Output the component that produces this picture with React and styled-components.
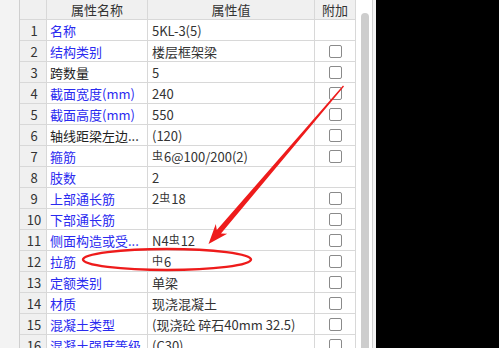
import React from "react";
import styled, { createGlobalStyle } from "styled-components";

const rows = [
  { name: "名称", value: "5KL-3(5)", blue: true, check: false },
  { name: "结构类别", value: "楼层框架梁", blue: true, check: true },
  { name: "跨数量", value: "5", blue: false, check: true },
  { name: "截面宽度(mm)", value: "240", blue: true, check: true },
  { name: "截面高度(mm)", value: "550", blue: true, check: true },
  { name: "轴线距梁左边...", value: "(120)", blue: false, check: true },
  { name: "箍筋", value: "#6@100/200(2)", blue: true, check: true },
  { name: "肢数", value: "2", blue: true, check: false },
  { name: "上部通长筋", value: "2#18", blue: true, check: true },
  { name: "下部通长筋", value: "", blue: true, check: true },
  { name: "侧面构造或受...", value: "N4#12", blue: true, check: true },
  { name: "拉筋", value: "$6", blue: true, check: true },
  { name: "定额类别", value: "单梁", blue: true, check: true },
  { name: "材质", value: "现浇混凝土", blue: true, check: true },
  { name: "混凝土类型", value: "(现浇砼 碎石40mm 32.5)", blue: true, check: true },
  { name: "混凝土强度等级", value: "(C30)", blue: true, check: true },
];

// '#' = 三级钢符号, '$' = 一级钢符号
function renderValue(text) {
  const parts = [];
  let buf = "";
  [...text].forEach((ch, i) => {
    if (ch === "#" || ch === "$") {
      if (buf) parts.push(buf);
      buf = "";
      parts.push(<Steel key={i}>{ch === "#" ? "虫" : "中"}</Steel>);
    } else {
      buf += ch;
    }
  });
  if (buf) parts.push(buf);
  return parts;
}

function App() {
  return (
    <>
      <GlobalStyle />
      <Panel>
        <Gutter />
        <Table>
          <HeadCell />
          <HeadCell>属性名称</HeadCell>
          <HeadCell>属性值</HeadCell>
          <HeadCell>附加</HeadCell>
          {rows.map((row, i) => (
            <React.Fragment key={i}>
              <NumCell>{i + 1}</NumCell>
              <NameCell $blue={row.blue}>{row.name}</NameCell>
              <ValueCell>{renderValue(row.value)}</ValueCell>
              <CheckCell>{row.check ? <Box /> : null}</CheckCell>
            </React.Fragment>
          ))}
        </Table>
        <Track>
          <Thumb />
        </Track>
        <Divider />
        <Edge />
      </Panel>
      <Marks width="499" height="348" viewBox="0 0 499 348">
        <ellipse
          cx="167"
          cy="259.5"
          rx="84"
          ry="10.5"
          fill="none"
          stroke="#ee1b1b"
          strokeWidth="2.4"
        />
        <polygon
          fill="#ee1b1b"
          points="344,86.4 221,233.6 227.2,233.7 208.5,244 215.8,223.9 216.8,230 343,85.6"
        />
      </Marks>
    </>
  );
}

export default App;

const GlobalStyle = createGlobalStyle`
  html, body {
    margin: 0;
    padding: 0;
    background: #000;
    overflow: hidden;
  }
  body {
    font-family: "Noto Sans CJK SC", "Noto Sans", sans-serif;
    font-size: 13px;
  }
`;

const Panel = styled.div`
  width: 376px;
  height: 348px;
  display: flex;
  background: #f0f0f0;
  overflow: hidden;
`;

const Gutter = styled.div`
  width: 19px;
  flex-shrink: 0;
  background: #f3f3f3;
`;

const Table = styled.div`
  width: 337px;
  flex-shrink: 0;
  align-self: flex-start;
  display: grid;
  grid-template-columns: 27px 101px 167px 41px;
  grid-auto-rows: 21px;
  grid-template-rows: 20px;
  border-left: 1px solid #cfcfcf;
  background: #fff;
`;

const Cell = styled.div`
  box-sizing: border-box;
  border-right: 1px solid #d8d8d8;
  border-bottom: 1px solid #d8d8d8;
  display: flex;
  align-items: center;
  white-space: nowrap;
  overflow: hidden;
  line-height: 1;
  color: #333;
`;

const HeadCell = styled(Cell)`
  justify-content: center;
  background: #f0f0f0;
  color: #333;
  padding-bottom: 1px;
`;

const NumCell = styled(Cell)`
  justify-content: center;
  padding-left: 2px;
  background: #f0f0f0;
  color: #333;
`;

const NameCell = styled(Cell)`
  padding-left: 3px;
  color: ${(p) => (p.$blue ? "#2a2af0" : "#222")};
`;

const ValueCell = styled(Cell)`
  padding-left: 4px;
  color: #333;
`;

const CheckCell = styled(Cell)`
  justify-content: center;
  padding-left: 1px;
`;

const Box = styled.div`
  width: 13px;
  height: 13px;
  box-sizing: border-box;
  border: 1px solid #8a8a8a;
  border-radius: 2px;
  background: #fff;
`;

const Steel = styled.span`
  font-size: 11px;
  margin: 0 1px 2px 0;
`;

const Track = styled.div`
  width: 15px;
  flex-shrink: 0;
  box-sizing: border-box;
  padding: 13px 0 0 4px;
  background: #fff;
`;

const Thumb = styled.div`
  width: 8px;
  height: 400px;
  border-radius: 4px 4px 0 0;
  background: #cdcdcd;
`;

const Divider = styled.div`
  width: 1px;
  flex-shrink: 0;
  background: #d0d0d0;
`;

const Edge = styled.div`
  width: 4px;
  flex-shrink: 0;
  background: #f4f4f4;
`;

const Marks = styled.svg`
  position: absolute;
  left: 0;
  top: 0;
  pointer-events: none;
`;
